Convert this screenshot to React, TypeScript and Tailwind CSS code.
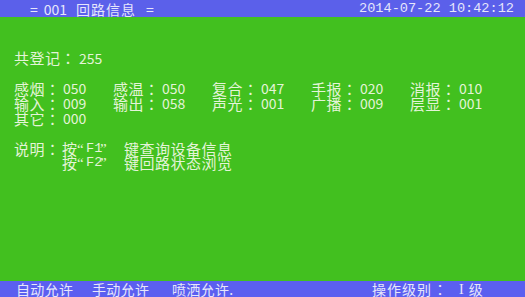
const cjk = { fontFamily: '"Noto Sans CJK SC", "Noto Sans", sans-serif' };
const jp = { fontFamily: '"Noto Sans CJK JP", sans-serif' };
const serif = { fontFamily: '"Liberation Serif", serif' };
const mono = { fontFamily: '"Liberation Mono", monospace' };

const counts: [string, string][][] = [
    [
        ['感烟', '050'],
        ['感温', '050'],
        ['复合', '047'],
        ['手报', '020'],
        ['消报', '010'],
    ],
    [
        ['输入', '009'],
        ['输出', '058'],
        ['声光', '001'],
        ['广播', '009'],
        ['层显', '001'],
    ],
    [['其它', '000']],
];

// label in 16px cells, centred colon, then the value
const Label = ({ text, width }: { text: string; width: string }) => (
    <span className={`flex shrink-0 ${width}`}>
        <span className="tracking-[0.5px]">{text}</span>
        <span className="w-[12px] text-center" style={jp}>
            ：
        </span>
    </span>
);

const Count = ({ label, value }: { label: string; value: string }) => (
    <div className="flex w-[99px] shrink-0 items-center">
        <Label text={label} width="w-[49px]" />
        <span className="text-[14px]">{value}</span>
    </div>
);

const Key = ({ name, text }: { name: string; text: string }) => (
    <div className="flex items-center">
        <span className="w-[15px] shrink-0">按</span>
        <span className="w-[9px] shrink-0" style={serif}>
            “
        </span>
        <span className="w-[14px] shrink-0 text-[13.6px]" style={mono}>
            {name}
        </span>
        <span className="w-[24px] shrink-0" style={serif}>
            ”
        </span>
        <span className="tracking-[0.5px]">{text}</span>
    </div>
);

const App = () => {
    return (
        <div
            className="flex h-[297px] w-[525px] flex-col overflow-hidden bg-[#42c01f] text-[#e4f4d8]"
            style={cjk}
        >
            <header className="flex h-[17px] shrink-0 items-center justify-between bg-[#5b60ea] pl-[30px] pr-[11px] text-[#e6e6fb]">
                <div className="flex items-center text-[14px] leading-none">
                    <span className="mr-[6px]">=</span>
                    <span className="mr-[9px]">001</span>
                    <span className="tracking-[1px]">回路信息</span>
                    <span className="ml-[10px]">=</span>
                </div>
                <div className="text-[13.6px] leading-none" style={mono}>
                    2014-07-22 10:42:12
                </div>
            </header>

            <main className="flex flex-1 flex-col pl-[14px] text-[15px]">
                <div className="mt-[33px] flex h-[15px] items-center leading-none">
                    <Label text="共登记" width="w-[65px]" />
                    <span className="text-[14px]">255</span>
                </div>

                <div className="mt-[16px] flex flex-col leading-[15px]">
                    {counts.map((row, i) => (
                        <div key={i} className="flex">
                            {row.map(([label, value]) => (
                                <Count key={label} label={label} value={value} />
                            ))}
                        </div>
                    ))}
                </div>

                <div className="mt-[16px] flex flex-col leading-[14px]">
                    <div className="flex items-center">
                        <Label text="说明" width="w-[48px]" />
                        <Key name="F1" text="键查询设备信息" />
                    </div>
                    <div className="pl-[48px]">
                        <Key name="F2" text="键回路状态浏览" />
                    </div>
                </div>
            </main>

            <footer className="flex h-[16px] shrink-0 items-end bg-[#5b5ff0] pl-[16px] text-[14px] leading-[15px] text-[#e6e6fb]">
                <span className="w-[76px] tracking-[0.3px]">自动允许</span>
                <span className="w-[80px] tracking-[0.3px]">手动允许</span>
                <span className="w-[200px] tracking-[0.3px]">喷洒允许.</span>
                <span className="tracking-[1px]">操作级别</span>
                <span className="w-[16px] text-center" style={jp}>
                    ：
                </span>
                <span className="ml-[11px] mr-[5px]" style={serif}>
                    I
                </span>
                <span>级</span>
            </footer>
        </div>
    );
};

export default App;
